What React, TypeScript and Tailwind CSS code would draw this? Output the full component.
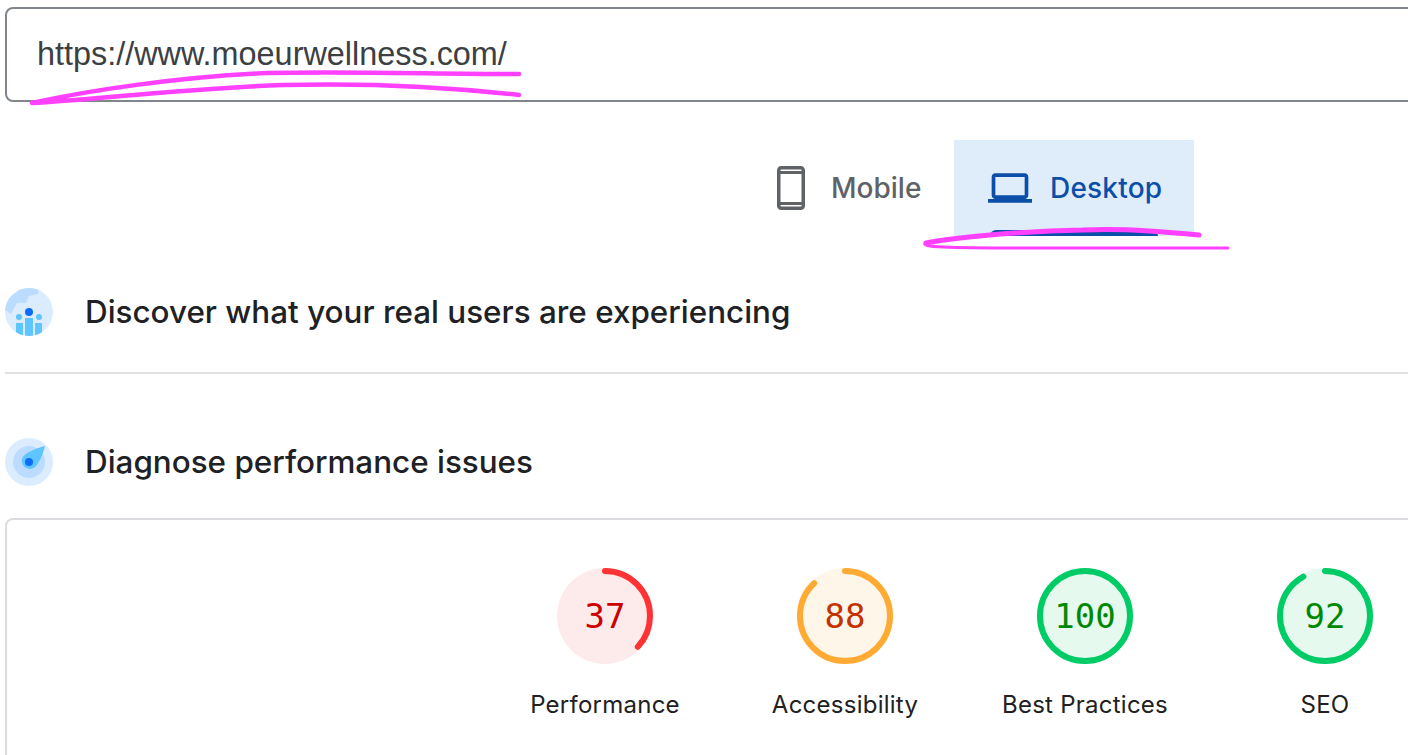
import React from 'react';

const scores = [
  { label: 'Performance', value: 37, ring: '#ff3333', fill: '#fdeaea', text: '#cc0000' },
  { label: 'Accessibility', value: 88, ring: '#ffaa33', fill: '#fff6ea', text: '#c33300' },
  { label: 'Best Practices', value: 100, ring: '#00cc66', fill: '#e5f9ef', text: '#008800' },
  { label: 'SEO', value: 92, ring: '#00cc66', fill: '#e5f9ef', text: '#008800' },
];

const Gauge = ({ label, value, ring, fill, text }: (typeof scores)[number]) => (
  <div className="w-[240px] shrink-0 flex flex-col items-center">
    <div className="relative w-[96px] h-[96px]">
      <svg width="96" height="96" viewBox="0 0 96 96" className="block">
        <circle cx="48" cy="48" r="48" fill={fill} />
        <circle
          cx="48"
          cy="48"
          r="45"
          fill="none"
          stroke={ring}
          strokeWidth="6"
          strokeLinecap={value === 100 ? 'butt' : 'round'}
          pathLength={100}
          strokeDasharray={`${value} 100`}
          transform="rotate(-90 48 48)"
        />
      </svg>
      <span
        className="absolute inset-0 flex items-center justify-center font-['DejaVu_Sans_Mono',monospace] text-[34px]"
        style={{ color: text }}
      >
        {value}
      </span>
    </div>
    <div className="mt-[26px] font-['Inter',sans-serif] text-[24px] tracking-[0.25px] leading-[30px] text-[#212121] whitespace-nowrap">
      {label}
    </div>
  </div>
);

const UsersIcon = () => (
  <svg width="48" height="48" viewBox="0 0 48 48" className="shrink-0">
    <defs>
      <clipPath id="users-clip">
        <circle cx="24" cy="24" r="24" />
      </clipPath>
    </defs>
    <g clipPath="url(#users-clip)">
      <rect width="48" height="48" fill="#dcecff" />
      <path d="M0 12 L12 4 L12 0 L34 0 L33 6 L24 8 L21 15 L12 15 L6 26 L0 22 Z" fill="#bbdcff" />
      <rect x="11" y="35" width="7" height="13" fill="#5ec5ff" />
      <rect x="20" y="30" width="8" height="18" fill="#5ec5ff" />
      <rect x="30" y="35" width="7" height="13" fill="#5ec5ff" />
    </g>
    <circle cx="14" cy="29" r="3" fill="#5ec5ff" />
    <circle cx="34" cy="29" r="3" fill="#5ec5ff" />
    <circle cx="24" cy="24" r="4" fill="#0b6ef9" />
  </svg>
);

const DiagnoseIcon = () => (
  <svg width="48" height="48" viewBox="0 0 48 48" className="shrink-0">
    <circle cx="24" cy="24" r="24" fill="#dcecff" />
    <circle cx="24" cy="24" r="16" fill="#bbdcff" />
    <path d="M40 8 C38 16 35 24 30 29 A8 8 0 0 1 18.5 18 C24 13 32 10 40 8 Z" fill="#5ec5ff" />
    <circle cx="24" cy="24" r="4" fill="#0b6ef9" />
  </svg>
);

const MobileIcon = () => (
  <svg width="28" height="44" viewBox="0 0 28 44" className="shrink-0">
    <rect x="1.75" y="1.75" width="24.5" height="40.5" rx="2.5" fill="none" stroke="#5f6368" strokeWidth="3.5" />
    <path d="M2 6.5 H26 M2 37.5 H26" stroke="#5f6368" strokeWidth="3" />
  </svg>
);

const LaptopIcon = () => (
  <svg width="44" height="44" viewBox="0 0 24 24" className="shrink-0" fill="#0b4fa8">
    <path d="M20 18c1.1 0 1.99-.9 1.99-2L22 6c0-1.1-.9-2-2-2H4c-1.1 0-2 .9-2 2v10c0 1.1.9 2 2 2H0v2h24v-2h-4zM4 6h16v10H4V6z" />
  </svg>
);

const Heading = ({ icon, children }: { icon: React.ReactNode; children: React.ReactNode }) => (
  <div className="flex items-center gap-[32px] h-[48px]">
    {icon}
    <h2 className="pt-[2px] font-['Inter',sans-serif] font-medium text-[31.4px] text-[#202124] whitespace-nowrap">{children}</h2>
  </div>
);

export default function App() {
  return (
    <div className="relative w-[1408px] h-[755px] overflow-hidden bg-white pl-[5px] pt-[7px]">
      {/* url box */}
      <div className="w-[1440px] h-[95px] border-2 border-[#80868b] rounded-[8px] flex items-center pl-[30px]">
        <span className="font-['Liberation_Sans',sans-serif] text-[32.4px] text-[#3c4043]">https://www.moeurwellness.com/</span>
      </div>

      {/* device tabs */}
      <div className="flex justify-end mr-[214px] mt-[38px] h-[96px]">
        <div className="flex items-center gap-[26px] w-[210px] pl-[33px]">
          <MobileIcon />
          <span className="font-['Inter',sans-serif] font-medium text-[28px] text-[#5f6368]">Mobile</span>
        </div>
        <div className="relative flex items-center gap-[18px] w-[240px] pl-[34px] bg-[#dfecfa]">
          <LaptopIcon />
          <span className="font-['Inter',sans-serif] font-medium text-[28px] tracking-[0.2px] text-[#0b4fa8]">Desktop</span>
          <div className="absolute left-[36px] bottom-0 w-[168px] h-[6px] rounded-t-[6px] bg-[#0b4fa8]" />
        </div>
      </div>

      <div className="mt-[52px]">
        <Heading icon={<UsersIcon />}>Discover what your real users are experiencing</Heading>
      </div>
      <div className="mt-[36px] h-[2px] bg-[#e0e0e0]" />
      <div className="mt-[64px]">
        <Heading icon={<DiagnoseIcon />}>Diagnose performance issues</Heading>
      </div>

      {/* score card */}
      <div className="mt-[32px] w-[1440px] h-[300px] border-2 border-[#dadce0] rounded-[8px] pl-[478px] pt-[48px] flex">
        {scores.map((s) => (
          <Gauge key={s.label} {...s} />
        ))}
      </div>

      {/* pink marker scribbles */}
      <svg className="absolute inset-0 pointer-events-none" width="1408" height="755" fill="none">
        <path
          d="M519 74 C440 74 340 71 267 73 C180 77 90 90 32 103 C90 100 190 88 283 85 C360 83 440 86 519 95"
          stroke="#ff40ff"
          strokeWidth="4.5"
          strokeLinecap="round"
          strokeLinejoin="round"
        />
        <path
          d="M1199 235 C1160 231 1120 228 1083 230 C1020 231 950 238 926 243"
          stroke="#ff40ff"
          strokeWidth="5"
          strokeLinecap="round"
        />
        <path
          d="M926 243 C918 247 950 248 1017 248 L1228 248"
          stroke="#ff40ff"
          strokeWidth="3"
          strokeLinecap="round"
          strokeLinejoin="round"
        />
      </svg>
    </div>
  );
}
